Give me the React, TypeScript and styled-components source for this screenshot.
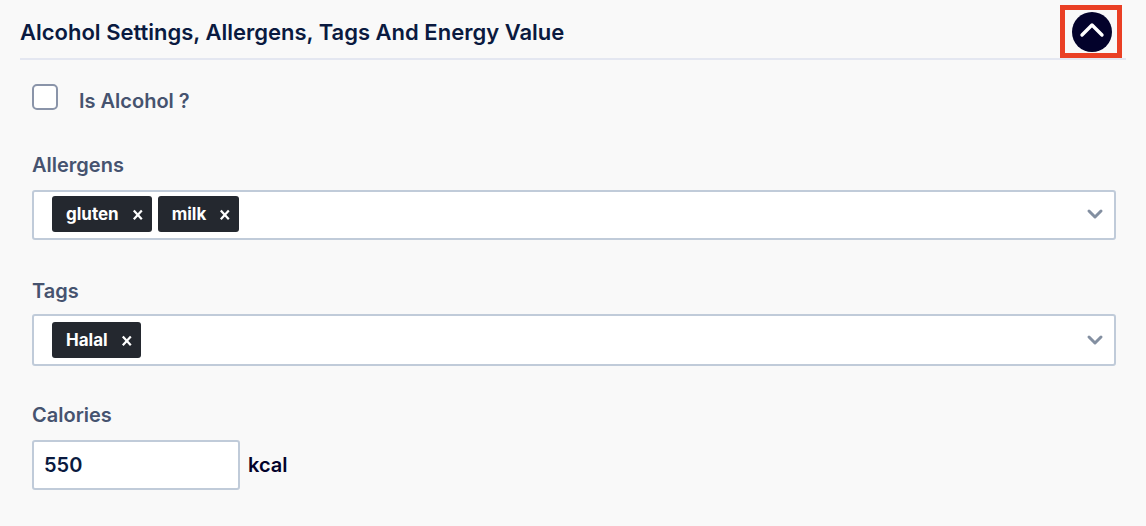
import React, { useState } from "react";
import styled, { createGlobalStyle } from "styled-components";

const GlobalStyle = createGlobalStyle`
  *, *::before, *::after { box-sizing: border-box; }
  body {
    margin: 0;
    background: #f9f9f9;
    color: #0a1a40;
    font-family: Inter, "Liberation Sans", sans-serif;
    font-weight: 600;
  }
`;

const Page = styled.main`
  padding: 0 20px 36px;
`;

const Header = styled.header`
  display: flex;
  align-items: flex-end;
  justify-content: space-between;
  padding: 5px 4px 0 0;
  border-bottom: 2px solid #e4e7f1;
`;

const Title = styled.h2`
  margin: 0;
  padding-bottom: 10px;
  font-size: 22px;
  font-weight: 600;
  line-height: 32px;
`;

const Highlight = styled.div`
  display: flex;
  padding: 2px 5px 1px 7px;
  border: 5px solid #ea4025;
`;

const CollapseButton = styled.button`
  display: grid;
  place-items: center;
  width: 40px;
  height: 40px;
  padding: 0;
  border: 0;
  border-radius: 50%;
  background: #03022b;
  cursor: pointer;
`;

const Form = styled.form`
  padding: 24px 10px 0 12px;
`;

const CheckRow = styled.div`
  display: flex;
  gap: 21px;
  margin-bottom: 38px;
`;

const Checkbox = styled.input`
  appearance: none;
  width: 26px;
  height: 26px;
  margin: 0;
  border: 2px solid #8a94a9;
  border-radius: 5px;
  background: #fff;
  &:checked { background: #03022b; }
`;

const CheckLabel = styled.label`
  padding-top: 4px;
  color: #46536f;
  font-size: 20px;
  line-height: 26px;
`;

const Field = styled.div<{ $spacing?: number; $labelGap?: number }>`
  display: flex;
  flex-direction: column;
  gap: ${(p) => p.$labelGap ?? 12}px;
  margin-top: ${(p) => p.$spacing ?? 0}px;
`;

const Label = styled.label`
  color: #46536f;
  font-size: 20px;
  line-height: 26px;
`;

const MultiSelect = styled.div<{ $top: number }>`
  display: flex;
  align-items: center;
  gap: 6px;
  padding: ${(p) => p.$top}px 10px 6px 18px;
  border: 2px solid #c0cbd9;
  border-radius: 3px;
  background: #fff;
`;

const Chip = styled.span`
  display: flex;
  align-items: center;
  gap: 13px;
  height: 36px;
  padding: 0 8px 0 14px;
  border-radius: 3px;
  background: #24282f;
  color: #fff;
  font-size: 17px;
  font-weight: 700;
  line-height: 36px;
`;

const IconButton = styled.button`
  display: flex;
  padding: 0;
  border: 0;
  background: none;
  cursor: pointer;
`;

const SearchInput = styled.input`
  flex: 1;
  min-width: 0;
  height: 36px;
  padding: 0;
  border: 0;
  outline: 0;
  background: transparent;
  font: inherit;
  font-size: 17px;
`;

const AmountRow = styled.div`
  display: flex;
  align-items: center;
  gap: 8px;
`;

const AmountInput = styled.input`
  width: 208px;
  height: 50px;
  padding: 0 10px;
  border: 2px solid #c0cbd9;
  border-radius: 3px;
  background: #fff;
  color: #0a1a40;
  font: inherit;
  font-size: 20px;
`;

const Unit = styled.span`
  color: #03022b;
  font-size: 20px;
  line-height: 26px;
`;

type TagSelectProps = { id: string; initial: string[]; top: number };

function TagSelect({ id, initial, top }: TagSelectProps) {
  const [items, setItems] = useState(initial);
  return (
    <MultiSelect $top={top}>
      {items.map((item) => (
        <Chip key={item}>
          {item}
          <IconButton
            type="button"
            aria-label={`Remove ${item}`}
            onClick={() => setItems(items.filter((i) => i !== item))}
          >
            <svg width="12" height="12" viewBox="0 0 12 12" fill="none" stroke="#fff" strokeWidth="2.2">
              <path d="M1.8 2.4l8 8.8M9.8 2.4l-8 8.8" />
            </svg>
          </IconButton>
        </Chip>
      ))}
      <SearchInput id={id} role="combobox" aria-expanded={false} />
      <IconButton type="button" aria-label="Show options">
        <svg width="18" height="14" viewBox="0 0 18 14" fill="none" stroke="#838fa1" strokeWidth="3" strokeLinecap="round" strokeLinejoin="round">
          <path d="M3 4l6 6 6-6" />
        </svg>
      </IconButton>
    </MultiSelect>
  );
}

export default function App() {
  const [open, setOpen] = useState(true);
  return (
    <Page>
      <GlobalStyle />
      <Header>
        <Title>Alcohol Settings, Allergens, Tags And Energy Value</Title>
        <Highlight>
          <CollapseButton
            type="button"
            aria-label="Toggle section"
            aria-expanded={open}
            onClick={() => setOpen(!open)}
          >
            <svg width="40" height="40" viewBox="0 0 40 40" fill="none" stroke="#fff" strokeWidth="3.4" strokeLinecap="round" strokeLinejoin="round">
              <path d="M10 23l10-10 10 10" />
            </svg>
          </CollapseButton>
        </Highlight>
      </Header>
      {open && (
        <Form>
          <CheckRow>
            <Checkbox type="checkbox" id="alcohol" />
            <CheckLabel htmlFor="alcohol">Is Alcohol ?</CheckLabel>
          </CheckRow>
          <Field>
            <Label htmlFor="allergens">Allergens</Label>
            <TagSelect id="allergens" initial={["gluten", "milk"]} top={4} />
          </Field>
          <Field $spacing={38} $labelGap={10}>
            <Label htmlFor="tags">Tags</Label>
            <TagSelect id="tags" initial={["Halal"]} top={6} />
          </Field>
          <Field $spacing={36}>
            <Label htmlFor="calories">Calories</Label>
            <AmountRow>
              <AmountInput id="calories" type="text" inputMode="numeric" defaultValue="550" />
              <Unit>kcal</Unit>
            </AmountRow>
          </Field>
        </Form>
      )}
    </Page>
  );
}
